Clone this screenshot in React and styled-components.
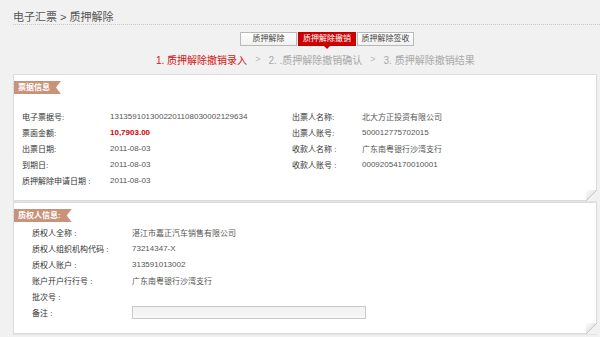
import styled, { createGlobalStyle } from 'styled-components'

const GlobalStyle = createGlobalStyle`
  html, body {
    margin: 0;
    padding: 0;
    background: #f1f1f1;
  }
  body {
    font-family: "Liberation Sans", "Noto Sans CJK SC", sans-serif;
    color: #333;
  }
`

const billLeft = [
  { label: '电子票据号:', value: '1313591013002201108030002129634' },
  { label: '票面金额:', value: '10,7903.00', money: true },
  { label: '出票日期:', value: '2011-08-03' },
  { label: '到期日:', value: '2011-08-03' },
  { label: '质押解除申请日期 :', value: '2011-08-03' },
]

const billRight = [
  { label: '出票人名称:', value: '北大方正投资有限公司' },
  { label: '出票人账号:', value: '500012775702015' },
  { label: '收款人名称 :', value: '广东南粤银行沙湾支行' },
  { label: '收款人账号 :', value: '00092054170010001' },
]

const pledgee = [
  { label: '质权人全称 :', value: '湛江市嘉正汽车销售有限公司' },
  { label: '质权人组织机构代码 :', value: '73214347-X' },
  { label: '质权人账户 :', value: '313591013002' },
  { label: '账户开户行行号 :', value: '广东南粤银行沙湾支行' },
  { label: '批次号 :', value: '' },
]

export default function App() {
  return (
    <Page>
      <GlobalStyle />
      <Header>电子汇票 &gt; 质押解除</Header>

      <Tabs>
        <Tab>质押解除</Tab>
        <Tab $active>质押解除撤销</Tab>
        <Tab>质押解除签收</Tab>
      </Tabs>

      <Steps>
        <Step $active>1. 质押解除撤销录入</Step>
        <Arrow>&gt;</Arrow>
        <Step>2. .质押解除撤销确认</Step>
        <Arrow>&gt;</Arrow>
        <Step>3. 质押解除撤销结果</Step>
      </Steps>

      <Panel>
        <Badge>票据信息</Badge>
        <BillGrid>
          <Column>
            {billLeft.map(row => (
              <Row key={row.label} $labelWidth={88}>
                <Label>{row.label}</Label>
                <Value $money={row.money}>{row.value}</Value>
              </Row>
            ))}
          </Column>
          <Column>
            {billRight.map(row => (
              <Row key={row.label} $labelWidth={70}>
                <Label>{row.label}</Label>
                <Value>{row.value}</Value>
              </Row>
            ))}
          </Column>
        </BillGrid>
      </Panel>

      <Panel $bottom>
        <Badge>质权人信息:</Badge>
        <PledgeeList>
          {pledgee.map(row => (
            <Row key={row.label} $labelWidth={100}>
              <Label>{row.label}</Label>
              <Value>{row.value}</Value>
            </Row>
          ))}
          <Row $labelWidth={100}>
            <Label>备注 :</Label>
            <Remark type="text" />
          </Row>
        </PledgeeList>
      </Panel>
    </Page>
  )
}

const Page = styled.div`
  width: 584px;
  padding: 0 3px 0 13px;
  overflow: hidden;
  height: 337px;
`

const Header = styled.div`
  padding-top: 10px;
  height: 14px;
  line-height: 14px;
  font-size: 11px;
  color: #555;
  border-bottom: 1px dotted #c8c8c8;
  margin-right: -3px;
`

const Tabs = styled.div`
  display: flex;
  margin: 7px 0 0 227px;
`

const Tab = styled.div`
  position: relative;
  width: ${p => (p.$active ? 58 : 57)}px;
  height: 14px;
  box-sizing: border-box;
  border: 1px solid ${p => (p.$active ? '#c40000' : '#b9b9b9')};
  background: ${p => (p.$active ? '#cc0000' : 'linear-gradient(#ffffff, #f1f1f1)')};
  color: ${p => (p.$active ? '#fff' : '#444')};
  font-size: 8px;
  line-height: 12px;
  text-align: center;
  margin-right: 1px;

  &::after {
    content: '';
    display: ${p => (p.$active ? 'block' : 'none')};
    position: absolute;
    left: 50%;
    bottom: -4px;
    margin-left: -3px;
    border-left: 3px solid transparent;
    border-right: 3px solid transparent;
    border-top: 3px solid #cc0000;
  }
`

const Steps = styled.div`
  display: flex;
  align-items: center;
  gap: 6px;
  margin: 6px 0 0 143px;
  height: 14px;
  font-size: 10px;
`

const Step = styled.span`
  color: ${p => (p.$active ? '#d11414' : '#a8a8a8')};
`

const Arrow = styled.span`
  color: #b5b5b5;
  font-size: 9px;
  margin: 0 2px;
`

const Panel = styled.div`
  position: relative;
  margin-top: ${p => (p.$bottom ? 1 : 8)}px;
  height: ${p => (p.$bottom ? 132 : 127)}px;
  box-sizing: border-box;
  background: #fff;
  border: 1px solid #dcdcdc;
  box-shadow: 0 1px 1px rgba(0, 0, 0, 0.05);
  padding-top: 6px;

  &::after {
    content: '';
    position: absolute;
    right: -1px;
    bottom: -1px;
    width: 11px;
    height: 11px;
    background: linear-gradient(135deg, #ffffff 0%, #e8e8e8 45%, #c9c9c9 50%, transparent 51%);
  }

  &::before {
    content: '';
    position: absolute;
    right: -1px;
    bottom: -1px;
    width: 11px;
    height: 11px;
    background: linear-gradient(135deg, transparent 50%, #f1f1f1 51%);
  }
`

const Badge = styled.div`
  width: fit-content;
  height: 13px;
  padding: 0 11px 0 4px;
  background: #c8927b;
  color: #fff;
  font-size: 8px;
  font-weight: bold;
  line-height: 13px;
  white-space: nowrap;
  clip-path: polygon(0 0, 100% 0, calc(100% - 5px) 50%, 100% 100%, 0 100%);
`

const BillGrid = styled.div`
  display: grid;
  grid-template-columns: 270px 1fr;
  padding: 14px 0 0 8px;
`

const Column = styled.div`
  display: flex;
  flex-direction: column;
`

const Row = styled.div`
  display: grid;
  grid-template-columns: ${p => p.$labelWidth}px 1fr;
  align-items: center;
  height: 16px;
  font-size: 8px;
`

const Label = styled.span`
  color: #333;
  white-space: nowrap;
`

const Value = styled.span`
  color: ${p => (p.$money ? '#d10000' : '#555')};
  font-weight: ${p => (p.$money ? 'bold' : 'normal')};
  white-space: nowrap;
`

const PledgeeList = styled.div`
  display: flex;
  flex-direction: column;
  padding: 2px 0 0 18px;
`

const Remark = styled.input`
  width: 234px;
  height: 13px;
  box-sizing: border-box;
  border: 1px solid #c9c9c9;
  background: linear-gradient(#f1f1f1, #f8f8f8);
  margin: 0;
  padding: 0;
  outline: none;
`
